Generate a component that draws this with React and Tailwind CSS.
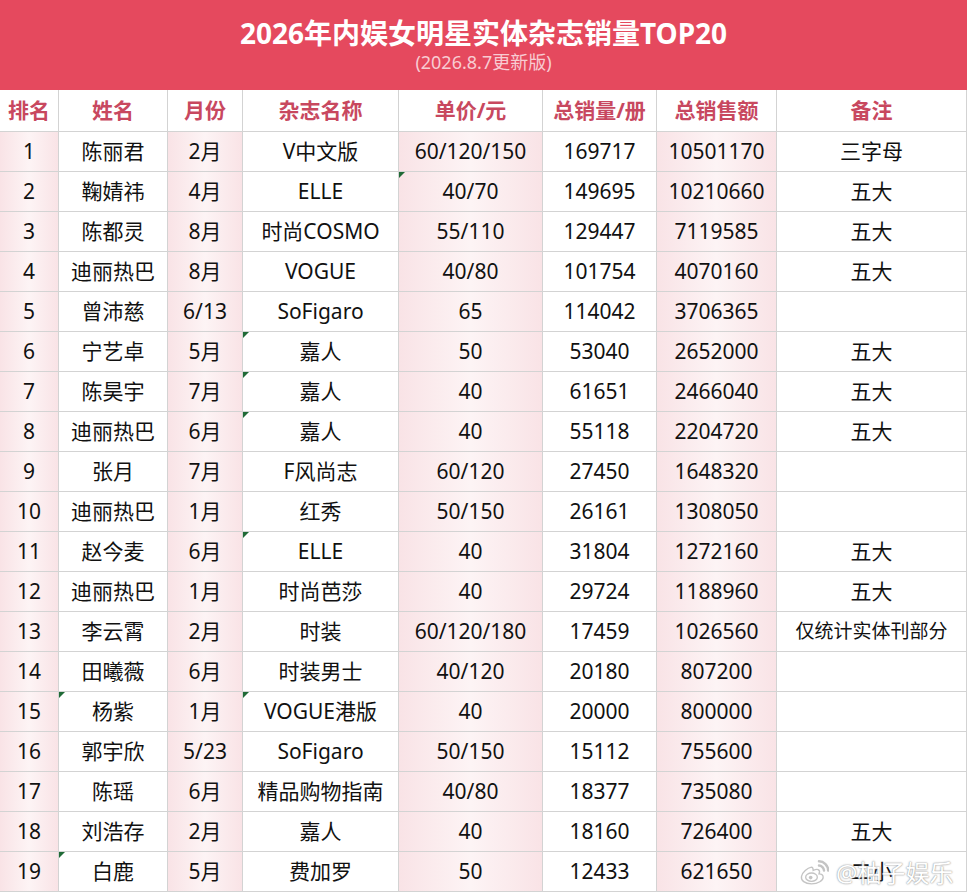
import React from "react";

const rows = [
  ["1", "陈丽君", "2月", "V中文版", "60/120/150", "169717", "10501170", "三字母"],
  ["2", "鞠婧祎", "4月", "ELLE", "40/70", "149695", "10210660", "五大"],
  ["3", "陈都灵", "8月", "时尚COSMO", "55/110", "129447", "7119585", "五大"],
  ["4", "迪丽热巴", "8月", "VOGUE", "40/80", "101754", "4070160", "五大"],
  ["5", "曾沛慈", "6/13", "SoFigaro", "65", "114042", "3706365", ""],
  ["6", "宁艺卓", "5月", "嘉人", "50", "53040", "2652000", "五大"],
  ["7", "陈昊宇", "7月", "嘉人", "40", "61651", "2466040", "五大"],
  ["8", "迪丽热巴", "6月", "嘉人", "40", "55118", "2204720", "五大"],
  ["9", "张月", "7月", "F风尚志", "60/120", "27450", "1648320", ""],
  ["10", "迪丽热巴", "1月", "红秀", "50/150", "26161", "1308050", ""],
  ["11", "赵今麦", "6月", "ELLE", "40", "31804", "1272160", "五大"],
  ["12", "迪丽热巴", "1月", "时尚芭莎", "40", "29724", "1188960", "五大"],
  ["13", "李云霄", "2月", "时装", "60/120/180", "17459", "1026560", "仅统计实体刊部分"],
  ["14", "田曦薇", "6月", "时装男士", "40/120", "20180", "807200", ""],
  ["15", "杨紫", "1月", "VOGUE港版", "40", "20000", "800000", ""],
  ["16", "郭宇欣", "5/23", "SoFigaro", "50/150", "15112", "755600", ""],
  ["17", "陈瑶", "6月", "精品购物指南", "40/80", "18377", "735080", ""],
  ["18", "刘浩存", "2月", "嘉人", "40", "18160", "726400", "五大"],
  ["19", "白鹿", "5月", "费加罗", "50", "12433", "621650", "二小"],
];

const headers = ["排名", "姓名", "月份", "杂志名称", "单价/元", "总销量/册", "总销售额", "备注"];

const marks = new Set(["2-4", "6-3", "7-3", "8-3", "11-3", "15-1", "15-3", "19-1"]);

function Tri() {
  return (
    <svg className="absolute left-0 top-0" width="6" height="6" viewBox="0 0 6 6">
      <polygon points="0,0 6,0 0,6" fill="#1f6a36" />
    </svg>
  );
}

function WeiboLogo() {
  return (
    <svg width="30" height="26" viewBox="0 0 36 30">
      <path
        d="M15 8c-5 1-11 6-12 11-1 5 4 9 12 9 8 0 14-4 14-8 0-3-3-4-5-4 1-2 1-4-1-5-2-1-4 0-6 1 0-3-1-4-2-4z"
        fill="#ffffff"
        stroke="#c4c4c4"
        strokeWidth="1.6"
      />
      <ellipse cx="15" cy="20" rx="7" ry="5" fill="none" stroke="#c4c4c4" strokeWidth="1.6" />
      <circle cx="14" cy="20.5" r="2.2" fill="#c4c4c4" />
      <path d="M24 6c3 0 6 3 6 6" fill="none" stroke="#c4c4c4" strokeWidth="3" strokeLinecap="round" />
      <path d="M24 1c6 0 11 5 11 11" fill="none" stroke="#c4c4c4" strokeWidth="3" strokeLinecap="round" />
    </svg>
  );
}

export default function App() {
  return (
    <div className="relative w-[967px] h-[893px] bg-white overflow-hidden font-['Noto_Sans','Noto_Sans_CJK_SC',sans-serif]">
      <div className="h-[90px] bg-[#e5495e] flex flex-col items-center">
        <div className="mt-[13px] text-[28px] leading-[40px] font-bold text-white">
          2026年内娱女明星实体杂志销量TOP20
        </div>
        <div className="mt-[-3px] text-[18px] leading-[24px] text-[#f8ccd2]">(2026.8.7更新版)</div>
      </div>
      <div className="grid grid-cols-[58px_108px_74px_155px_143px_113px_119px_189px] gap-px bg-[#d3d3d3] w-[967px] pr-px pb-px">
        {headers.map((h) => (
          <div
            key={h}
            className="h-[41px] bg-white flex items-center justify-center text-[21px] font-bold text-[#c8485f]"
          >
            {h}
          </div>
        ))}
        {rows.map((r, ri) =>
          r.map((c, ci) => {
            const pink = ci % 2 === 0;
            const small = c.length > 6 && ci === 7;
            return (
              <div
                key={ri + "-" + ci}
                className={
                  "relative h-[39px] flex items-center justify-center whitespace-nowrap text-[#111111] " +
                  (small ? "text-[19px] " : "text-[21px] ") +
                  (pink
                    ? "bg-[linear-gradient(90deg,#f9e3e6,#fdf4f5_50%,#f9e3e6)]"
                    : "bg-white")
                }
              >
                {marks.has(ri + 1 + "-" + ci) && <Tri />}
                {c}
              </div>
            );
          })
        )}
      </div>
      <div className="absolute left-[799px] top-[858px] flex items-center gap-[7px] whitespace-nowrap">
        <WeiboLogo />
        <span className="text-[24px] leading-[30px] text-white opacity-90 [text-shadow:0_0_2px_#8a8a8a,0_0_1px_#9a9a9a]">
          @柚子娱乐
        </span>
      </div>
    </div>
  );
}
